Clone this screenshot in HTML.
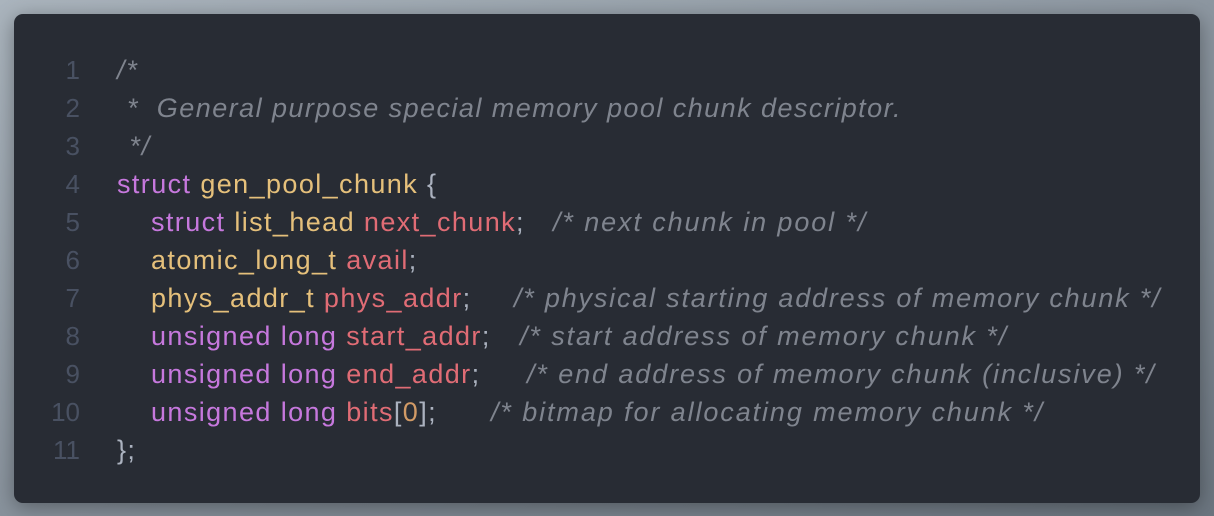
<!DOCTYPE html>
<html><head><style>
html,body{margin:0;padding:0;width:1214px;height:516px;overflow:hidden;background:linear-gradient(160deg,#aab4bd 0%,#8a949e 50%,#6b757f 100%);}
.card{position:absolute;left:14px;top:14px;width:1186px;height:489px;background:#282c34;border-radius:9px;box-shadow:0 4px 20px rgba(0,0,0,.35);}
.l{position:absolute;left:0;height:38px;line-height:38px;font-family:"Liberation Sans","DejaVu Sans",sans-serif;font-size:27px;color:#abb2bf;white-space:pre;}
.n{position:absolute;width:66px;text-align:right;color:#495162;left:0;font-size:26px;}
.c{position:absolute;letter-spacing:1.4px;}
.k{color:#c678dd}.t{color:#e5c07b}.v{color:#e06c75}.o{color:#d19a66}
.cm{color:#7f848e;font-style:italic;position:absolute;letter-spacing:1.9px;}
</style></head><body><div class="card">
<div class="l" style="top:37px"><span class="n">1</span><span class="cm" style="left:103px">/*</span></div>
<div class="l" style="top:75px"><span class="n">2</span><span class="cm" style="left:104px;letter-spacing:1.45px"> *  General purpose special memory pool chunk descriptor.</span></div>
<div class="l" style="top:113px"><span class="n">3</span><span class="cm" style="left:106px"> */</span></div>
<div class="l" style="top:151px"><span class="n">4</span><span class="c" style="left:103px"><span class="k">struct</span> <span class="t">gen_pool_chunk</span> {</span></div>
<div class="l" style="top:189px"><span class="n">5</span><span class="c" style="left:137px"><span class="k">struct</span> <span class="t">list_head</span> <span class="v">next_chunk</span>;</span><span class="cm" style="left:539px">/* next chunk in pool */</span></div>
<div class="l" style="top:227px"><span class="n">6</span><span class="c" style="left:137px"><span class="t">atomic_long_t</span> <span class="v">avail</span>;</span></div>
<div class="l" style="top:265px"><span class="n">7</span><span class="c" style="left:137px"><span class="t">phys_addr_t</span> <span class="v">phys_addr</span>;</span><span class="cm" style="left:500px;letter-spacing:1.8px">/* physical starting address of memory chunk */</span></div>
<div class="l" style="top:303px"><span class="n">8</span><span class="c" style="left:137px"><span class="k">unsigned long</span> <span class="v">start_addr</span>;</span><span class="cm" style="left:506px">/* start address of memory chunk */</span></div>
<div class="l" style="top:341px"><span class="n">9</span><span class="c" style="left:137px"><span class="k">unsigned long</span> <span class="v">end_addr</span>;</span><span class="cm" style="left:513px">/* end address of memory chunk (inclusive) */</span></div>
<div class="l" style="top:379px"><span class="n">10</span><span class="c" style="left:137px"><span class="k">unsigned long</span> <span class="v">bits</span>[<span class="o">0</span>];</span><span class="cm" style="left:477px">/* bitmap for allocating memory chunk */</span></div>
<div class="l" style="top:417px"><span class="n">11</span><span class="c" style="left:103px">};</span></div>
</div></body></html>
